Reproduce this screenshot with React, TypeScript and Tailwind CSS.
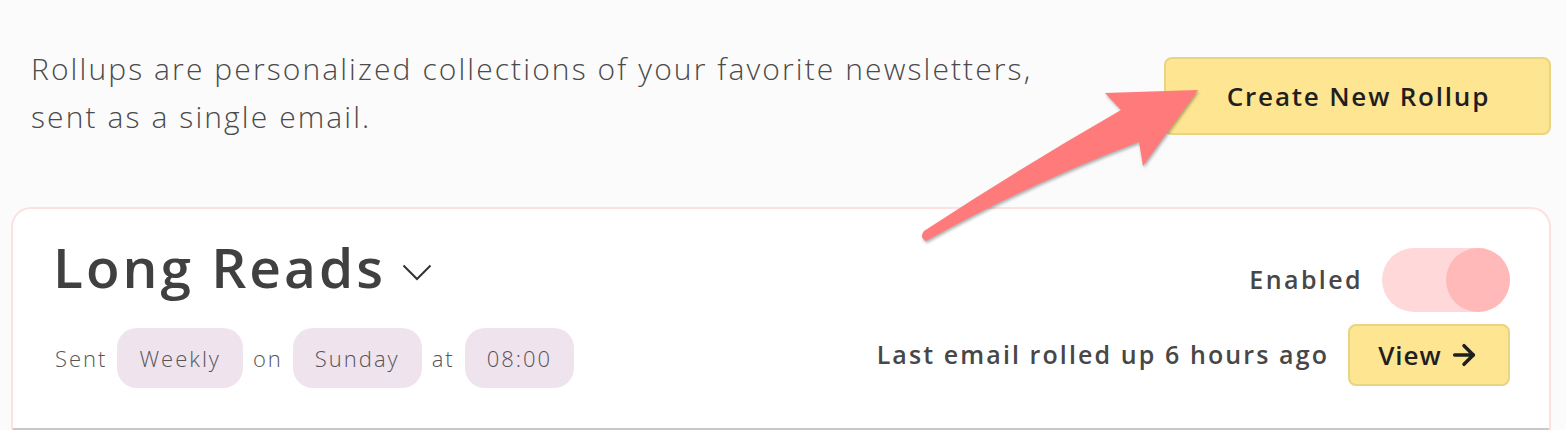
import { ArrowRight } from "lucide-react"

const font = { fontFamily: "'Open Sans', Lato, sans-serif" }

function Pill({ children }: { children: React.ReactNode }) {
  return (
    <span className="flex h-[60px] items-center rounded-[20px] bg-[#efe3ee] px-[22px] text-[22px] font-light tracking-[2px] text-[#555]">
      {children}
    </span>
  )
}

function PointerArrow() {
  return (
    <svg
      className="pointer-events-none absolute left-0 top-0"
      width="1566"
      height="430"
      viewBox="0 0 1566 430"
      style={{ filter: "drop-shadow(1px 2px 1.5px rgba(0,0,0,0.3))" }}
    >
      <path
        d="M1198 90 L1105 93 L1121 110 Q1020 168 924 231 Q919 237 926 241 Q1032 182 1139 142 L1143 166 Z"
        fill="#ff7b7b"
        strokeLinejoin="round"
      />
    </svg>
  )
}

export default function App() {
  return (
    <div className="relative h-[430px] overflow-hidden bg-[#fbfbfb] px-[11px] pt-[57px]" style={font}>
      {/* Intro + create */}
      <div className="flex h-[150px] items-start justify-between pr-[4px]">
        <p className="-mt-[12px] pl-[20px] text-[30px] font-light leading-[48px] tracking-[2.1px] text-[#4a4a4a]">
          Rollups are personalized collections of your favorite newsletters,
          <br />
          sent as a single email.
        </p>
        <button className="h-[78px] w-[387px] rounded-[8px] border-2 border-[#e8d483] bg-[#fee591] pl-[2px] text-[26px] font-semibold tracking-[1.8px] text-[#1f1f1f]">
          Create New Rollup
        </button>
      </div>

      {/* Rollup card */}
      <div className="mr-[4px] rounded-t-[20px] border-2 border-b-0 border-[#fde0e0] bg-white">
        <div className="flex items-start justify-between pl-[40px] pr-[39px] pt-[22px]">
          <div>
            <div className="flex items-center gap-[16px]">
              <h1 className="text-[55px] font-semibold leading-[72px] tracking-[3px] text-[#404040]">Long Reads</h1>
              <svg className="mt-[10px]" width="30" height="17" viewBox="0 0 30 17" fill="none">
                <polyline points="1.5,1.5 15,15 28.5,1.5" stroke="#333" strokeWidth="2" />
              </svg>
            </div>
            <div className="mt-[25px] flex items-center gap-[10px] text-[22px] font-light tracking-[2px] text-[#555]">
              <span className="pl-[2px]">Sent</span>
              <Pill>Weekly</Pill>
              <span>on</span>
              <Pill>Sunday</Pill>
              <span>at</span>
              <Pill>08:00</Pill>
            </div>
          </div>

          <div className="flex flex-col items-end gap-[12px] pt-[17px]">
            <div className="flex items-center gap-[19px]">
              <span className="text-[25px] font-semibold tracking-[2.4px] text-[#474747]">Enabled</span>
              <div className="flex h-[64px] w-[128px] justify-end rounded-full bg-[#ffd9d9]">
                <div className="h-[64px] w-[64px] rounded-full bg-[#ffb9b8]" />
              </div>
            </div>
            <div className="flex items-center gap-[19px]">
              <span className="text-[25px] font-semibold tracking-[2.1px] text-[#474747]">Last email rolled up 6 hours ago</span>
              <button className="flex h-[62px] w-[162px] items-center justify-center gap-[6px] rounded-[8px] border-2 border-[#e8d483] bg-[#fee591] text-[26px] font-semibold tracking-[1px] text-[#1f1f1f]">
                View
                <ArrowRight className="h-[32px] w-[32px]" strokeWidth={2.6} />
              </button>
            </div>
          </div>
        </div>
        <div className="mt-[40px] h-[2px] bg-[#c8c8c8]" />
      </div>

      <PointerArrow />
    </div>
  )
}
